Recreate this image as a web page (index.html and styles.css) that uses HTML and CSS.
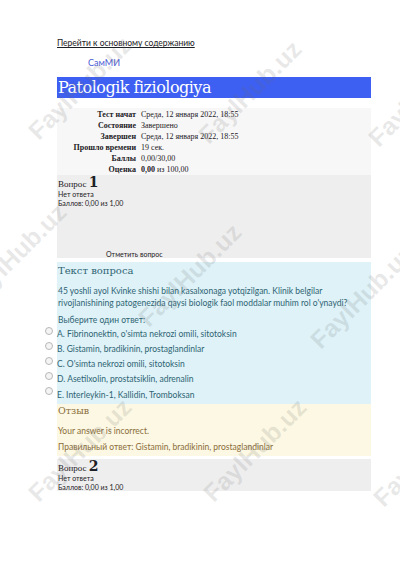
FILE: index.html
```html
<!DOCTYPE html>
<html lang="ru">
<head>
<meta charset="utf-8">
<title>Patologik fiziologiya</title>
<link rel="stylesheet" href="styles.css">
</head>
<body>
<div class="page">
  <a class="skip" href="#main">Перейти к основному содержанию</a>
  <div class="brand">СамМИ</div>
  <h1 class="title">Patologik fiziologiya</h1>
  <table class="summary">
    <tr><th>Тест начат</th><td>Среда, 12 января 2022, 18:55</td></tr>
    <tr><th>Состояние</th><td>Завершено</td></tr>
    <tr><th>Завершен</th><td>Среда, 12 января 2022, 18:55</td></tr>
    <tr><th>Прошло времени</th><td>19 сек.</td></tr>
    <tr><th>Баллы</th><td>0,00/30,00</td></tr>
    <tr><th>Оценка</th><td><b>0,00</b> из 100,00</td></tr>
  </table>

  <div class="info info-tall" id="main">
    <div class="qno">Вопрос <span class="num">1</span></div>
    <div class="state">Нет ответа</div>
    <div class="state">Баллов: 0,00 из 1,00</div>
    <div class="flag">Отметить вопрос</div>
  </div>

  <div class="formulation">
    <h4 class="accesshide">Текст вопроса</h4>
    <p class="qtext">45 yoshli ayol Kvinke shishi bilan kasalxonaga yotqizilgan. Klinik belgilar rivojlanishining patogenezida qaysi biologik faol moddalar muhim rol o'ynaydi?</p>
    <p class="prompt">Выберите один ответ:</p>
    <div class="answers">
      <label class="opt"><span class="radio"></span><span>A. Fibrinonektin, o'simta nekrozi omili, sitotoksin</span></label>
      <label class="opt"><span class="radio"></span><span>B. Gistamin, bradikinin, prostaglandinlar</span></label>
      <label class="opt"><span class="radio"></span><span>C. O'simta nekrozi omili, sitotoksin</span></label>
      <label class="opt"><span class="radio"></span><span>D. Asetilxolin, prostatsiklin, adrenalin</span></label>
      <label class="opt opt-last"><span class="radio"></span><span>E. Interleykin-1, Kallidin, Tromboksan</span></label>
    </div>
  </div>

  <div class="feedback">
    <h4 class="fb-title">Отзыв</h4>
    <p class="fb-line">Your answer is incorrect.</p>
    <p class="fb-line fb-right">Правильный ответ: Gistamin, bradikinin, prostaglandinlar</p>
  </div>

  <div class="info info-short">
    <div class="qno">Вопрос <span class="num">2</span></div>
    <div class="state">Нет ответа</div>
    <div class="state">Баллов: 0,00 из 1,00</div>
  </div>
</div>

<div class="watermarks" aria-hidden="true">
  <span class="wm wm1">FaylHub.uz</span>
  <span class="wm wm2">FaylHub.uz</span>
  <span class="wm wm3">FaylHub.uz</span>
  <span class="wm wm4">FaylHub.uz</span>
  <span class="wm wm5">FaylHub.uz</span>
  <span class="wm wm6">FaylHub.uz</span>
  <span class="wm wm7">FaylHub.uz</span>
  <span class="wm wm8">FaylHub.uz</span>
  <span class="wm wm9">FaylHub.uz</span>
</div>
</body>
</html>
```

FILE: styles.css
```css
html, body {
  margin: 0;
  padding: 0;
  background: #ffffff;
}
body {
  width: 400px;
  height: 566px;
  overflow: hidden;
  position: relative;
  font-family: Lato, "Noto Sans", sans-serif;
  color: #1d2125;
}
.page {
  margin-left: 57px;
  width: 314px;
  padding-top: 38px;
}
.skip {
  display: block;
  font-size: 8.5px;
  line-height: 11px;
  color: #1d2125;
  text-decoration: underline;
}
.brand {
  margin-top: 8px;
  padding-left: 31px;
  font-size: 9px;
  line-height: 11px;
  color: #4b5bd4;
}
.title {
  margin: 9px 0 0;
  height: 21px;
  background: #3d5ff2;
  color: #ffffff;
  font-family: "DejaVu Serif", serif;
  font-weight: normal;
  font-size: 16px;
  line-height: 21px;
  padding-left: 1px;
  letter-spacing: -0.5px;
}
.summary {
  margin-top: 10px;
  width: 100%;
  border-collapse: collapse;
  background: #f7f7f7;
  font-family: "Liberation Serif", serif;
  font-size: 8px;
  line-height: 11px;
  color: #1d2125;
}
.summary th {
  width: 79px;
  text-align: right;
  font-weight: bold;
  padding: 0 5px 0 0;
  white-space: nowrap;
}
.summary td {
  padding: 0;
}
.summary tr:first-child th,
.summary tr:first-child td { padding-top: 1px; }
.info {
  background: #eeeeee;
  padding: 1px 0 0 1px;
  font-size: 7px;
  line-height: 9px;
  color: #1d2125;
}
.info-tall {
  height: 82px;
  margin-bottom: 4px;
}
.info-short {
  height: 31px;
  margin-top: 3px;
}
.qno {
  font-family: "Liberation Serif", serif;
  font-size: 9px;
  line-height: 12px;
}
.num {
  font-size: 14px;
  font-weight: bold;
  font-family: "DejaVu Serif", serif;
}
.flag {
  margin-top: 42px;
  padding-left: 48px;
  font-size: 7px;
}
.formulation {
  background: #def2f8;
  color: #2f6473;
  padding: 2px 0 1px 1px;
}
.accesshide {
  margin: 0;
  font-family: "DejaVu Serif", serif;
  font-weight: normal;
  font-size: 10px;
  line-height: 14px;
}
.qtext {
  margin: 7px 0 0;
  font-size: 8.5px;
  line-height: 12px;
  color: #2f6473;
}
.prompt {
  margin: 5px 0 0;
  font-size: 8.5px;
  line-height: 12px;
}
.answers {
  display: flex;
  flex-direction: column;
  margin-top: 1px;
}
.opt {
  display: flex;
  align-items: flex-start;
  font-size: 8.5px;
  line-height: 15px;
  height: 15px;
}
.opt-last {
  height: 16px;
  align-items: flex-end;
}
.radio {
  flex: none;
  width: 6px;
  height: 6px;
  border: 1px solid #b8b8b8;
  border-radius: 50%;
  background: #f4f4f4;
  margin: 0 4px 0 -13px;
  align-self: flex-start;
}
.feedback {
  background: #fcf8e3;
  color: #8a6d3b;
  padding: 0 0 3px 1px;
}
.fb-title {
  margin: 0;
  font-family: "DejaVu Serif", serif;
  font-weight: normal;
  font-size: 9.5px;
  line-height: 14px;
}
.fb-line {
  margin: 8px 0 0;
  font-size: 8.5px;
  line-height: 11px;
}
.fb-right {
  margin-top: 5px;
}
.watermarks {
  position: absolute;
  inset: 0;
  pointer-events: none;
}
.wm {
  position: absolute;
  font-family: "Liberation Sans", sans-serif;
  font-weight: bold;
  font-size: 25px;
  color: rgba(110, 110, 110, 0.16);
  white-space: nowrap;
  transform: translate(-50%, -50%) rotate(-45deg);
}
.wm1 { left: 80px; top: 88px; }
.wm2 { left: 250px; top: 92px; }
.wm3 { left: 420px; top: 95px; }
.wm4 { left: 15px; top: 255px; }
.wm5 { left: 190px; top: 275px; }
.wm6 { left: 362px; top: 297px; }
.wm7 { left: 80px; top: 450px; }
.wm8 { left: 255px; top: 450px; }
.wm9 { left: 425px; top: 455px; }
```
